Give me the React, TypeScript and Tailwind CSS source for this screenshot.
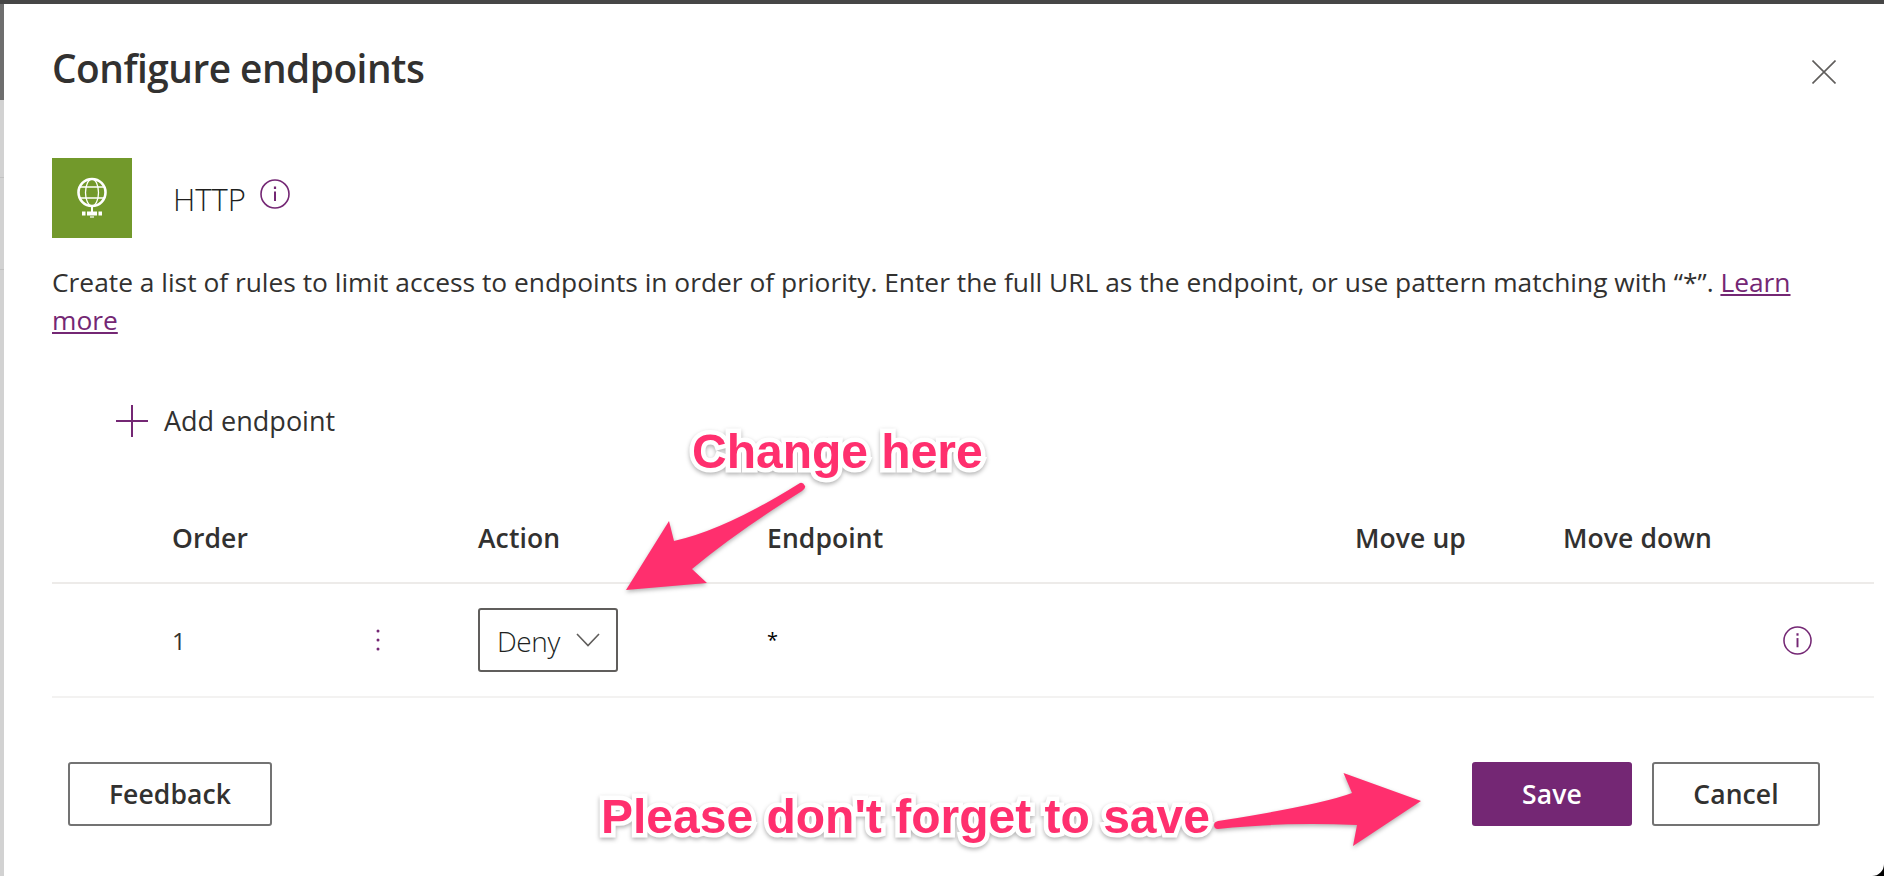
const fontBody = 'font-["Open_Sans","Noto_Sans",sans-serif]'

function InfoIcon({ className }: { className?: string }) {
  return (
    <svg viewBox="0 0 30 30" className={className} fill="none" stroke="#742774">
      <circle cx="15" cy="15" r="14" strokeWidth="1.6" />
      <path d="M15 12.5V22" strokeWidth="2" />
      <path d="M15 7.5V10" strokeWidth="2.2" />
    </svg>
  )
}

function GlobeIcon() {
  return (
    <svg viewBox="0 0 80 80" className="w-20 h-20" fill="none" stroke="#fff">
      <circle cx="40" cy="34.5" r="13.5" strokeWidth="2.6" />
      <ellipse cx="40" cy="34.5" rx="6.5" ry="13.5" strokeWidth="1.3" />
      <path d="M27.5 29H52.5M27.5 40H52.5" strokeWidth="1.3" />
      <path d="M40 48V54" strokeWidth="2" />
      <path d="M30 55.5H50" strokeWidth="4" strokeDasharray="3.5 1.5 10 1.5 3.5" />
      <path d="M38 59H42" strokeWidth="1.2" />
    </svg>
  )
}

function Annotations() {
  const label =
    'absolute font-["Liberation_Sans",Arial,sans-serif] font-bold text-[48px] leading-none text-[#ff2f6e] whitespace-nowrap [-webkit-text-stroke:9px_white] [paint-order:stroke_fill] drop-shadow-[0_2px_2px_rgba(0,0,0,0.3)]'
  return (
    <>
      <div className={`${label} left-[692px] top-[428px]`}>Change here</div>
      <div className={`${label} left-[601px] top-[793px]`}>Please don't forget to save</div>
      <svg
        viewBox="0 0 1884 876"
        className="absolute inset-0 w-full h-full pointer-events-none drop-shadow-[0_2px_2px_rgba(0,0,0,0.3)]"
      >
        <path
          d="M800 483 Q803 482 805 486 Q806 488 802 491 Q735 533 692 569 L707 583 L626 590 L669 521 L674 541 Q725 530 800 483Z"
          fill="#ff2f6e"
        />
        <path
          d="M1218 821 Q1320 805 1352 793 L1343.5 773 L1421 801 L1353 846 L1357 825 Q1280 822 1218 829 Q1214 829 1214 825 Q1214 822 1218 821Z"
          fill="#ff2f6e"
        />
      </svg>
    </>
  )
}

export default function App() {
  return (
    <div className={`${fontBody} relative w-full h-[876px] overflow-hidden bg-white text-[#323130] flex flex-col`}>
      <div className="h-1 bg-[#464646] shrink-0" />
      <div className="flex flex-1 min-h-0">
        <div className="w-1 shrink-0 flex flex-col">
          <div className="h-24 bg-[#6e6e6e]" />
          <div className="h-[78px] bg-[#d2d2d2] border-b border-[#c2c2c2]" />
          <div className="h-[92px] bg-[#d2d2d2] border-b border-[#c2c2c2]" />
          <div className="flex-1 bg-[#d2d2d2]" />
        </div>
        <main className="flex-1 min-w-0 flex flex-col pl-12 pr-[10px]">
          <header className="h-[92px] flex items-start justify-between pr-[38px]">
            <h1 className="mt-[40px] text-[38.8px] leading-[48px] font-semibold tracking-[-0.5px]">Configure endpoints</h1>
            <svg viewBox="0 0 24 24" className="w-6 h-6 mt-14" stroke="#605e5c" strokeWidth="1.6">
              <path d="M0.5 0.5L23.5 23.5M23.5 0.5L0.5 23.5" />
            </svg>
          </header>

          <div className="mt-[62px] h-20 flex">
            <div className="w-20 h-20 bg-[#72992b]">
              <GlobeIcon />
            </div>
            <span className="ml-[41px] mt-[21px] text-[31px] leading-[40px] font-light text-[#201f1e]">HTTP</span>
            <InfoIcon className="ml-[14px] mt-[21px] w-[30px] h-[30px]" />
          </div>

          <p className="mt-[26px] w-[1760px] text-[26.35px] leading-[37.5px]">
            Create a list of rules to limit access to endpoints in order of priority. Enter the full URL as the endpoint, or use pattern matching with “*”.{' '}
            <a className="text-[#742774] underline">Learn more</a>
          </p>

          <button className="mt-[62px] ml-16 flex items-center gap-[16px] h-10">
            <svg viewBox="0 0 32 32" className="w-8 h-8" stroke="#742774" strokeWidth="2">
              <path d="M16 0V32M0 16H32" />
            </svg>
            <span className="text-[27px]">Add endpoint</span>
          </button>

          <div className="mt-[78px] grid grid-cols-[426px_289px_588px_208px_1fr] h-[65px] border-b-2 border-[#edebe9] text-[26.5px] font-semibold tracking-[0.1px]">
            <div className="pl-[120px]">Order</div>
            <div>Action</div>
            <div>Endpoint</div>
            <div>Move up</div>
            <div>Move down</div>
          </div>

          <div className="grid grid-cols-[426px_289px_588px_208px_1fr] h-[114px] items-center border-b-2 border-[#f3f2f1] text-[24px]">
            <div className="pl-[120px] flex items-center">
              <span className="w-[204px] pt-[2px]">1</span>
              <svg viewBox="0 0 4 24" className="w-1 h-6" fill="#742774">
                <circle cx="2" cy="3" r="1.5" />
                <circle cx="2" cy="12" r="1.5" />
                <circle cx="2" cy="21" r="1.5" />
              </svg>
            </div>
            <div>
              <div className="w-[140px] h-[64px] border-2 border-[#605e5c] rounded-[3px] flex items-center pl-[17px] gap-[16px]">
                <span className="pt-[2px] text-[28px] font-light tracking-[-0.4px] text-[#201f1e]">Deny</span>
                <svg viewBox="0 0 24 14" className="w-6 h-3.5" fill="none" stroke="#605e5c" strokeWidth="1.6">
                  <path d="M1 1L12 12.5L23 1" />
                </svg>
              </div>
            </div>
            <div className="text-[20px] text-black">*</div>
            <div />
            <div className="flex justify-end pr-[62px]">
              <InfoIcon className="w-[29px] h-[29px]" />
            </div>
          </div>

          <footer className="mt-[64px] flex items-start pl-4">
            <button className="w-[204px] h-[64px] pt-[2px] border-2 border-[#737373] rounded-[3px] text-[26.5px] font-semibold tracking-[0.1px]">
              Feedback
            </button>
            <button className="ml-[1200px] w-[160px] h-[64px] pt-[2px] rounded-[3px] bg-[#742774] text-white text-[26.5px] font-semibold tracking-[0.1px]">
              Save
            </button>
            <button className="ml-5 w-[168px] h-[64px] pt-[2px] border-2 border-[#737373] rounded-[3px] text-[26.5px] font-semibold tracking-[0.1px]">
              Cancel
            </button>
          </footer>
        </main>
      </div>
      <Annotations />
      <div className="absolute right-0 bottom-0 w-3 h-3 bg-black [clip-path:path('M12_0V12H0A12_12_0_0_0_12_0Z')]" />
    </div>
  )
}
